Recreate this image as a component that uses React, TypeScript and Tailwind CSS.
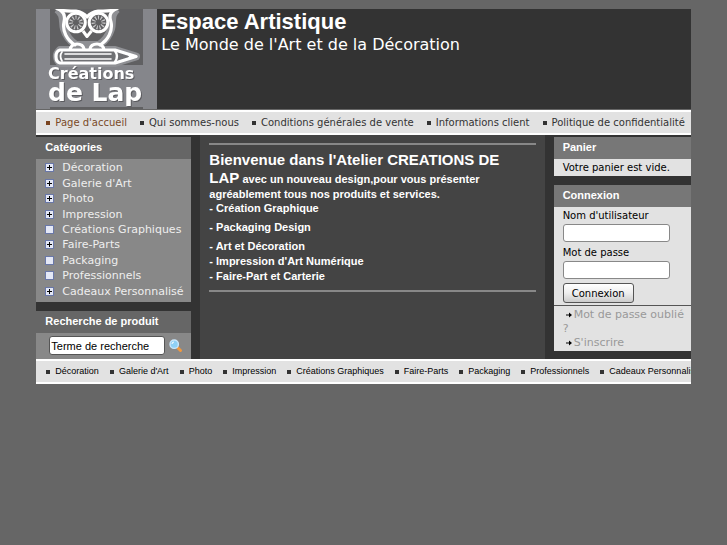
import React from 'react';

const navLinks = [
  "Page d'accueil",
  'Qui sommes-nous',
  'Conditions générales de vente',
  'Informations client',
  'Politique de confidentialité',
];

const categories = [
  { name: 'Décoration', hasChildren: true },
  { name: "Galerie d'Art", hasChildren: true },
  { name: 'Photo', hasChildren: true },
  { name: 'Impression', hasChildren: true },
  { name: 'Créations Graphiques', hasChildren: false },
  { name: 'Faire-Parts', hasChildren: true },
  { name: 'Packaging', hasChildren: false },
  { name: 'Professionnels', hasChildren: false },
  { name: 'Cadeaux Personnalisé', hasChildren: true },
];

const Logo: React.FC = () => (
  <svg className="shrink-0 bg-[#85868b]" width="121" height="100" viewBox="0 0 121 100" fill="none" aria-hidden="true">
    <rect x="14" y="0" width="93" height="56" fill="#606062" />
    <rect x="14" y="98" width="93" height="2" fill="#606062" />
    {/* soft halo behind the owl */}
    <g stroke="#8f9094" strokeWidth="8" strokeLinejoin="round">
      <path d="M21 0 C29 6 26 12 28 20 C30 27 34 32 40 36 H63 C69 32 73 27 75 20 C77 12 74 6 81 0" />
      <path d="M24 41 H79 L100 47.5 L79 54 H24 Q18 47 24 41Z" />
    </g>
    <g stroke="#fff" strokeWidth="3.2" strokeLinecap="round" strokeLinejoin="round">
      <path d="M20 -1 C26 3 34 2 40 2 Q47 3 51 8 Q55 3 62 2 C68 2 76 3 82 -1" />
      <path d="M24 1 Q30 5 28 13 C26 22 31 31 39 36 M78 1 Q72 5 75 13 C77 22 72 31 64 36" />
      <path d="M34 41 Q35 35 41 35 Q47 35 48 40 M54 40 Q55 35 61 35 Q67 35 68 41" />
      <path d="M24 41 H79 L100 47.5 L79 54 H24 Q20 53 20 47.5 Q20 42 24 41Z" fill="#707174" />
      <path d="M79 42 Q83 47 79 53" strokeWidth="2.4" />
      <path d="M26 43 Q23 47 26 52" strokeWidth="1.8" />
      <path d="M29 45 H75 M29 50 H75" strokeWidth="1.6" />
    </g>
    <path d="M90 44 L102 47.5 L90 51.5 L93 47.5Z" fill="#fff" />
    <g stroke="#fff">
      <circle cx="40" cy="13.5" r="9.3" strokeWidth="3" fill="#606062" />
      <circle cx="62.5" cy="13.5" r="9.3" strokeWidth="3" fill="#606062" />
      <g stroke="#c9c9cb" strokeWidth="4" strokeDasharray="1.1 1.7">
        <circle cx="40" cy="13.5" r="5" />
        <circle cx="62.5" cy="13.5" r="5" />
      </g>
    </g>
    <path d="M47 22 L51 27.5 L55.5 22" stroke="#fff" strokeWidth="3" strokeLinejoin="round" />
    <g fill="#fff" fontWeight="700" className="font-['DejaVu_Sans',sans-serif] drop-shadow-[1px_1px_0px_#5c5c60]">
      <text x="12" y="70" fontSize="16">Créations</text>
      <text x="12" y="92" fontSize="25">de Lap</text>
    </g>
  </svg>
);

const TreeIcon: React.FC<{ plus: boolean }> = ({ plus }) => (
  <svg width="9" height="9" viewBox="0 0 9 9" className="shrink-0" aria-hidden="true">
    <rect x="0.5" y="0.5" width="8" height="8" fill="#e4e8f6" stroke="#6a78a8" />
    {plus && <path d="M2 4.5H7M4.5 2V7" stroke="#000" />}
  </svg>
);

const SearchIcon: React.FC = () => (
  <svg width="14" height="14" viewBox="0 0 14 14" aria-hidden="true">
    <path d="M9 9L11.5 11.5" stroke="#f0983f" strokeWidth="3" strokeLinecap="round" />
    <circle cx="5.2" cy="5.2" r="4.2" fill="#8fd0f5" stroke="#c9e6fa" strokeWidth="1.4" />
    <path d="M3 5Q3 3 5 3" stroke="#fff" fill="none" />
  </svg>
);

const ArrowIcon: React.FC = () => (
  <svg width="6" height="6" viewBox="0 0 6 6" className="mr-[2px] inline-block" aria-hidden="true">
    <path d="M0 2.5H3V0.5L6 3L3 5.5V3.5H0Z" fill="#000" />
  </svg>
);

const PanelTitle: React.FC<{ children: React.ReactNode; className?: string }> = ({ children, className = 'bg-[#666]' }) => (
  <h3 className={`h-[22px] pl-[9px] font-['Liberation_Sans',sans-serif] text-[11px] leading-[20px] font-bold text-white ${className}`}>
    {children}
  </h3>
);

const Bullet: React.FC<{ className?: string }> = ({ className = 'bg-[#333]' }) => (
  <span className={`size-1 shrink-0 ${className}`} />
);

const App: React.FC = () => {
  return (
    <div className="min-h-screen bg-[#666] pt-[9px] font-['DejaVu_Sans',sans-serif] text-[10px]">
      <div className="mx-auto w-[90%]">
        <header className="flex bg-[#333] text-white">
          <Logo />
          <div className="pl-1">
            <h1 className="font-['Liberation_Sans',sans-serif] text-[22px] leading-[25px] font-bold">Espace Artistique</h1>
            <p className="text-[16px] leading-[22px]">Le Monde de l'Art et de la Décoration</p>
          </div>
        </header>

        <nav className="mt-px overflow-hidden border-y-2 border-white bg-[#e2e2e2]">
          <ul className="flex h-[21px] items-center gap-[13px] pl-[10px] whitespace-nowrap">
            {navLinks.map((label, i) => (
              <li key={label} className="flex items-center gap-[5px]">
                <Bullet className={i === 0 ? 'bg-[#7a4420]' : 'bg-[#333]'} />
                <a href="#" className={i === 0 ? 'text-[#7a4a28]' : 'text-[#333]'}>{label}</a>
              </li>
            ))}
          </ul>
        </nav>

        <div className="flex bg-[#333]">
          {/* Left column */}
          <aside className="flex w-[155px] shrink-0 flex-col pt-[2px]">
            <PanelTitle>Catégories</PanelTitle>
            <ul className="grid flex-1 auto-rows-fr bg-[#888] pt-px pb-[3px] pl-[9px] text-[11px] leading-[15px] text-[#eee]">
              {categories.map((c) => (
                <li key={c.name} className="flex items-center gap-2 whitespace-nowrap">
                  <TreeIcon plus={c.hasChildren} />
                  <a href="#">{c.name}</a>
                </li>
              ))}
            </ul>
            <PanelTitle className="mt-[9px] bg-[#666]">Recherche de produit</PanelTitle>
            <form className="flex items-center gap-1 bg-[#888] pt-[3px] pb-1 pl-[13px]" onSubmit={(e) => e.preventDefault()}>
              <input
                type="text"
                aria-label="Terme de recherche"
                defaultValue="Terme de recherche"
                className="h-[19px] w-[116px] rounded-[3px] border border-[#555] bg-white px-px font-['Liberation_Sans',sans-serif] text-[11px] text-black"
              />
              <button type="submit" aria-label="Rechercher"><SearchIcon /></button>
            </form>
          </aside>

          {/* Content */}
          <main className="mx-[9px] min-w-0 flex-1 bg-[#444] px-[9px] pt-2 font-['Liberation_Sans',sans-serif] text-[11px] font-bold text-white">
            <hr className="mb-[6px] border-t-2 border-[#888]" />
            <p className="leading-[14px]">
              <span className="text-[15px] leading-[18px]">Bienvenue dans l'Atelier CREATIONS DE<br />LAP</span> avec un nouveau
              design,pour vous présenter agréablement tous nos produits et services.
            </p>
            <ul className="leading-[15px]">
              <li>- Création Graphique</li>
              <li className="my-1">- Packaging Design</li>
              <li>- Art et Décoration</li>
              <li>- Impression d'Art Numérique</li>
              <li>- Faire-Part et Carterie</li>
            </ul>
            <hr className="mt-[6px] border-t-2 border-[#888]" />
          </main>

          {/* Right column */}
          <aside className="w-[137px] shrink-0 pt-[2px] pb-2 text-black">
            <PanelTitle className="bg-[#777]">Panier</PanelTitle>
            <p className="h-[17px] bg-[#e2e2e2] pl-[9px] leading-[17px]">Votre panier est vide.</p>
            <PanelTitle className="mt-[9px] bg-[#777]">Connexion</PanelTitle>
            <div className="bg-[#e2e2e2]">
              <form className="px-[9px] pt-px pb-[2px]" onSubmit={(e) => e.preventDefault()}>
                <label htmlFor="username" className="block leading-[16px]">Nom d'utilisateur</label>
                <input id="username" type="text" className="block h-[18px] w-[107px] rounded-[3px] border border-[#888] bg-white px-1" />
                <label htmlFor="password" className="mt-[2px] block leading-[17px]">Mot de passe</label>
                <input id="password" type="password" className="block h-[18px] w-[107px] rounded-[3px] border border-[#888] bg-white px-1" />
                <button
                  type="submit"
                  className="mt-1 block h-5 w-[71px] rounded-[3px] border border-[#555] bg-linear-to-b from-white via-[#eee] to-[#ccc]"
                >
                  Connexion
                </button>
              </form>
              <ul className="border-t border-[#555] pt-[2px] pr-1 pb-px pl-[9px] text-[11px] leading-[14px] text-[#999]">
                <li className="indent-[3px]"><ArrowIcon /><a href="#">Mot de passe oublié ?</a></li>
                <li className="indent-[3px]"><ArrowIcon /><a href="#">S'inscrire</a></li>
              </ul>
            </div>
          </aside>
        </div>

        <footer className="overflow-hidden border-y-2 border-white bg-[#e2e2e2] font-['Liberation_Sans',sans-serif] text-[9px] text-black">
          <ul className="flex h-[21px] items-center gap-[11px] pl-[10px] whitespace-nowrap">
            {categories.map((c) => (
              <li key={c.name} className="flex items-center gap-[5px]">
                <Bullet />
                <a href="#">{c.name}</a>
              </li>
            ))}
          </ul>
        </footer>
      </div>
    </div>
  );
};

export default App;
